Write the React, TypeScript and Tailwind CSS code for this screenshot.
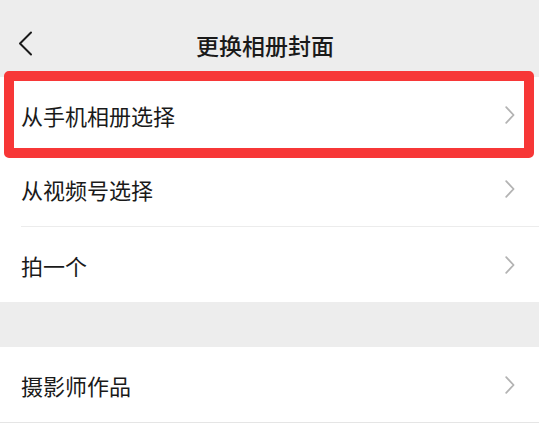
import React from "react";

const Chevron = () => (
  <svg width="10" height="18" viewBox="0 0 10 18" fill="none" className="shrink-0">
    <path d="M1.2 1.2 L8.6 9 L1.2 16.8" stroke="#b3b3b3" strokeWidth="1.8" strokeLinecap="round" strokeLinejoin="round" />
  </svg>
);

const Row = ({ label, divider }: { label: string; divider?: boolean }) => (
  <div className="flex h-[75px] items-center bg-white pl-[21px]">
    <div className={`flex h-full flex-1 items-center pr-[24px] ${divider ? "border-b border-[#ececec]" : ""}`}>
      <span className="flex-1 text-[22px] leading-none text-[#1a1a1a]">{label}</span>
      <Chevron />
    </div>
  </div>
);

export default function App() {
  return (
    <div
      className="relative h-[423px] w-[539px] overflow-hidden bg-[#ededed]"
      style={{ fontFamily: '"Noto Sans CJK SC", "Noto Sans", sans-serif' }}
    >
      <div className="relative flex h-[77px] items-center justify-center pr-[9px] pt-[13px]">
        <svg
          width="15"
          height="25"
          viewBox="0 0 15 25"
          fill="none"
          className="absolute left-[18px] top-[31px]"
        >
          <path d="M13 1.5 L2 12.5 L13 23.5" stroke="#1a1a1a" strokeWidth="2" strokeLinecap="round" strokeLinejoin="round" />
        </svg>
        <span className="text-[23px] font-medium leading-none text-[#1a1a1a]">更换相册封面</span>
      </div>
      <div className="flex flex-col">
        <Row label="从手机相册选择" />
        <Row label="从视频号选择" divider />
        <Row label="拍一个" />
      </div>
      <div className="h-[45px]" />
      <div className="flex flex-col border-b border-[#e5e5e5]">
        <Row label="摄影师作品" />
      </div>
      <div className="pointer-events-none absolute left-[4px] top-[71px] h-[87px] w-[530px] rounded-[5px] border-[10px] border-[#f73737]" />
    </div>
  );
}
